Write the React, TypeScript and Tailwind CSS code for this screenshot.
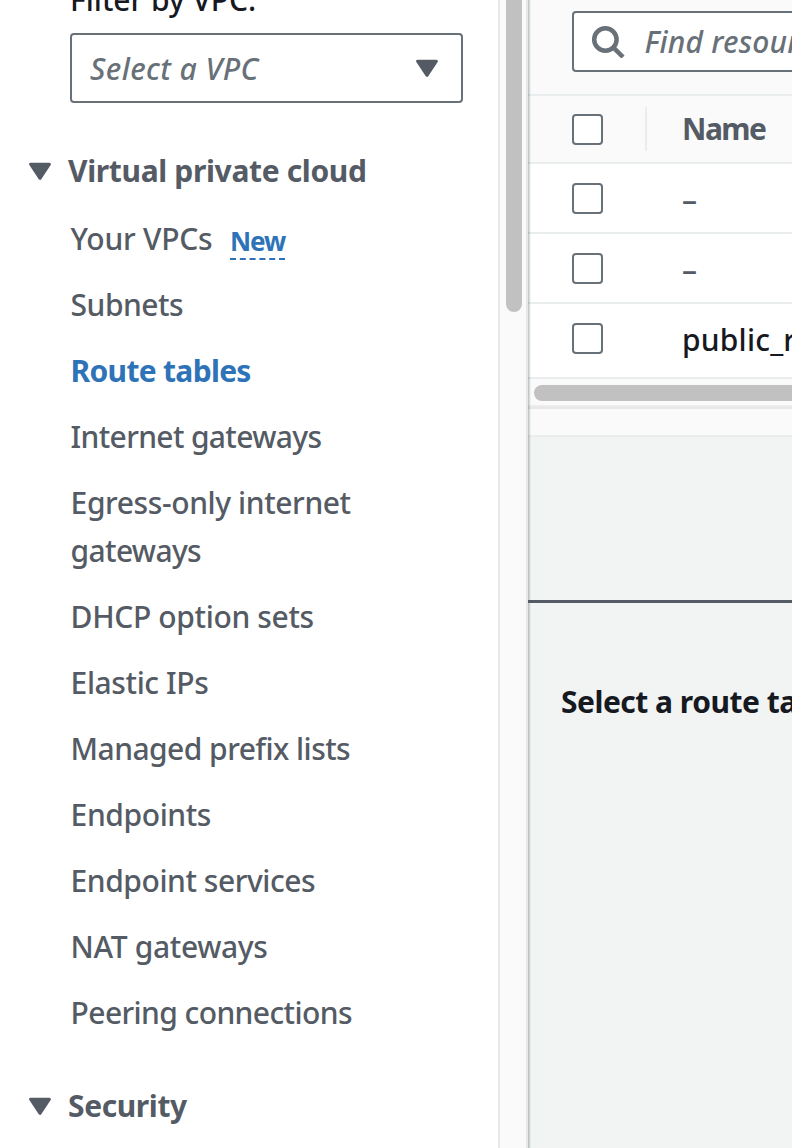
import React from "react";

type NavItem = { lines: { text: string; tracking: string }[]; active?: boolean; badge?: string };

const items: NavItem[] = [
  { lines: [{ text: "Your VPCs", tracking: "tracking-[-0.25px]" }], badge: "New" },
  { lines: [{ text: "Subnets", tracking: "tracking-[-0.5px]" }] },
  { lines: [{ text: "Route tables", tracking: "tracking-[-0.7px]" }], active: true },
  { lines: [{ text: "Internet gateways", tracking: "tracking-[-0.65px]" }] },
  {
    lines: [
      { text: "Egress-only internet", tracking: "tracking-[-0.4px]" },
      { text: "gateways", tracking: "tracking-[-0.65px]" },
    ],
  },
  { lines: [{ text: "DHCP option sets", tracking: "tracking-[-0.35px]" }] },
  { lines: [{ text: "Elastic IPs", tracking: "tracking-[-0.4px]" }] },
  { lines: [{ text: "Managed prefix lists", tracking: "tracking-[-0.55px]" }] },
  { lines: [{ text: "Endpoints", tracking: "tracking-[-0.4px]" }] },
  { lines: [{ text: "Endpoint services", tracking: "tracking-[-0.45px]" }] },
  { lines: [{ text: "NAT gateways", tracking: "tracking-[-0.35px]" }] },
  { lines: [{ text: "Peering connections", tracking: "tracking-[-0.6px]" }] },
];

function Caret() {
  return (
    <svg className="block h-[18px] w-[22px] shrink-0" viewBox="0 0 22 18" fill="#545b64" stroke="#545b64" strokeWidth="3" strokeLinejoin="round">
      <path d="M1.6 2.2H20.4L11 16.3Z" />
    </svg>
  );
}

function SectionHeading({ title, tracking }: { title: string; tracking: string }) {
  return (
    <div className="flex h-12 items-center pl-[29px]">
      <Caret />
      <h2 className={`ml-[17px] text-[30px] leading-12 font-bold ${tracking}`}>{title}</h2>
    </div>
  );
}

function Checkbox() {
  return <span className="ml-11 block size-[31px] shrink-0 rounded-[4px] border-2 border-[#687078] bg-white" />;
}

function Row({ name, height, dark }: { name: string; height: string; dark?: boolean }) {
  return (
    <div className={`flex shrink-0 items-start border-b-2 border-[#eaeded] bg-white pt-[19px] ${height}`}>
      <Checkbox />
      <span className={`ml-[79px] -mt-[7px] text-[30px] leading-12 font-medium tracking-[0.2px] ${dark ? "text-[#16191f]" : "text-[#545b64]"}`}>
        {name}
      </span>
    </div>
  );
}

function Sidebar() {
  return (
    <aside className="flex w-[498px] shrink-0 flex-col bg-white text-[#545b64]">
      <div className="-mt-[24px] h-12 pl-[70px] text-[30px] leading-12 font-medium tracking-[-0.05px] text-[#16191f]">Filter by VPC:</div>
      <div className="mt-[9px] ml-[70px] flex h-[70px] w-[393px] items-center justify-between rounded-[4px] border-2 border-[#687078] pr-[23px] pl-[18px]">
        <span className="text-[30px] font-medium tracking-[0.4px] text-[#687078] italic">Select a VPC</span>
        <Caret />
      </div>
      <div className="mt-[44px]">
        <SectionHeading title="Virtual private cloud" tracking="tracking-[-0.35px]" />
      </div>
      <ul className="mt-[20px] flex flex-col gap-[18px] pl-[70.6px] text-[30px] leading-12">
        {items.map((item) => (
          <li key={item.lines[0].text} className={item.active ? "font-bold text-[#2e73b8]" : "font-medium"}>
            {item.lines.map((line) => (
              <div key={line.text} className="flex h-12 whitespace-nowrap">
                <span className={line.tracking}>{line.text}</span>
                {item.badge && (
                  <span className="mt-[10px] ml-[17.5px] flex h-[35px] w-[55px] flex-col justify-between text-[26px] leading-[32px] font-bold tracking-[-1px] text-[#2e73b8]">
                    {item.badge}
                    <svg className="block h-[2px] w-[55px] shrink-0" viewBox="0 0 55 2">
                      <path d="M0 1H55" stroke="#2e73b8" strokeWidth="2" strokeDasharray="6 3.8" />
                    </svg>
                  </span>
                )}
              </div>
            ))}
          </li>
        ))}
      </ul>
      <div className="mt-[45px]">
        <SectionHeading title="Security" tracking="tracking-[-0.4px]" />
      </div>
    </aside>
  );
}

function Main() {
  return (
    <main className="relative flex min-w-0 grow flex-col bg-[#f2f3f3]">
      <div className="flex h-[96px] shrink-0 border-b-2 border-[#eaeded] bg-[#fafafa] pt-[11px] pl-11">
        <div className="flex h-[61px] w-[400px] shrink-0 items-center rounded-[4px] border-2 border-[#687078] bg-white pl-[18px]">
          <svg className="block h-8 w-[33px] shrink-0" viewBox="0 0 33 32" fill="none" stroke="#687078" strokeWidth="4.5">
            <circle cx="13.4" cy="13.5" r="11.2" />
            <path d="M21.2 21.4L31 31" />
          </svg>
          <span className="ml-[19.5px] text-[30px] font-medium tracking-[0.2px] whitespace-nowrap text-[#687078] italic">Find resources</span>
        </div>
      </div>
      <div className="flex h-[68px] shrink-0 items-center border-b-2 border-[#eaeded] bg-[#fafafa]">
        <Checkbox />
        <span className="ml-[42px] h-11 w-[2px] bg-[#eaeded]" />
        <span className="ml-[35px] text-[30px] leading-12 font-bold tracking-[-1.5px] text-[#545b64]">Name</span>
      </div>
      <Row name="–" height="h-[70px]" />
      <Row name="–" height="h-[70px]" />
      <Row name="public_route" height="h-[75px]" dark />
      <div className="h-[26px] shrink-0 bg-[#fafafa] pt-[6px] pl-[6px]">
        <div className="h-4 rounded-l-full bg-[#c1c1c1]" />
      </div>
      <div className="h-[4px] shrink-0 border-t-2 border-b-2 border-t-[#ececec] border-b-[#e7e7e7]" />
      <div className="h-[28px] shrink-0 border-b-2 border-[#eaeded] bg-[#fafafa]" />
      <div className="h-[163px] shrink-0" />
      <div className="relative z-10 h-[3px] shrink-0 bg-[#545b64]" />
      <p className="mt-[75px] ml-[33px] text-[30px] leading-12 font-bold tracking-[-0.5px] whitespace-nowrap text-[#16191f]">Select a route table</p>
      <div className="absolute inset-y-0 left-0 w-[3px] bg-linear-to-r from-[rgba(0,28,36,0.28)] to-transparent" />
    </main>
  );
}

export default function App() {
  return (
    <div className="flex h-[1148px] w-[792px] overflow-hidden bg-white font-['Noto_Sans',sans-serif]">
      <Sidebar />
      <div className="w-[30px] shrink-0 border-x-2 border-[#e8e8e8] bg-[#fafafa] pl-[6px]">
        <div className="h-[312px] w-4 rounded-b-full bg-[#c1c1c1]" />
      </div>
      <Main />
    </div>
  );
}
